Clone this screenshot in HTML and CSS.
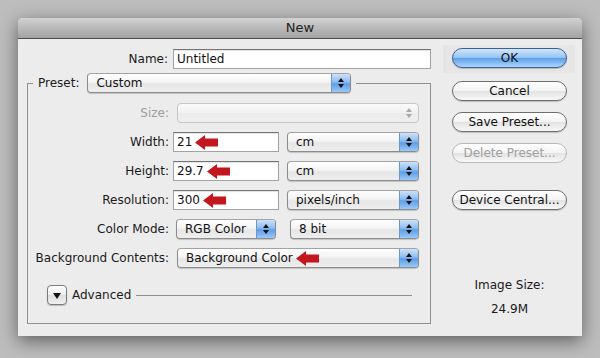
FILE: index.html
```html
<!DOCTYPE html>
<html lang="en">
<head>
    <meta charset="UTF-8">
    <meta name="viewport" content="width=device-width, initial-scale=1.0">
    <title>New</title>
    <link rel="stylesheet" href="styles.css">
</head>
<body>

    <div class="window">
        <div class="title-bar">New</div>

        <div class="window-body">
            <div class="main-panel">
                <div class="name-row">
                    <span class="field-label">Name:</span>
                    <div class="text-field name-field">Untitled</div>
                </div>

                <fieldset class="preset-group">
                    <legend class="preset-legend">
                        <span class="field-label">Preset:</span>
                        <div class="popup preset-popup">
                            <span class="popup-text">Custom</span>
                            <span class="popup-cap"></span>
                        </div>
                    </legend>

                    <div class="form-grid">
                        <span class="field-label disabled">Size:</span>
                        <div class="control-cell">
                            <div class="popup popup-disabled size-popup">
                                <span class="popup-text"></span>
                                <span class="popup-cap"></span>
                            </div>
                        </div>

                        <span class="field-label">Width:</span>
                        <div class="control-cell">
                            <div class="text-field value-field">21<svg class="red-arrow" width="23" height="15" viewBox="0 0 23 15"><path d="M0 7.5 L10 0 V3.5 H23 V11.5 H10 V15 Z"/></svg></div>
                            <div class="popup unit-popup">
                                <span class="popup-text">cm</span>
                                <span class="popup-cap"></span>
                            </div>
                        </div>

                        <span class="field-label">Height:</span>
                        <div class="control-cell">
                            <div class="text-field value-field">29.7<svg class="red-arrow" width="23" height="15" viewBox="0 0 23 15"><path d="M0 7.5 L10 0 V3.5 H23 V11.5 H10 V15 Z"/></svg></div>
                            <div class="popup unit-popup">
                                <span class="popup-text">cm</span>
                                <span class="popup-cap"></span>
                            </div>
                        </div>

                        <span class="field-label">Resolution:</span>
                        <div class="control-cell">
                            <div class="text-field value-field">300<svg class="red-arrow" width="23" height="15" viewBox="0 0 23 15"><path d="M0 7.5 L10 0 V3.5 H23 V11.5 H10 V15 Z"/></svg></div>
                            <div class="popup unit-popup">
                                <span class="popup-text">pixels/inch</span>
                                <span class="popup-cap"></span>
                            </div>
                        </div>

                        <span class="field-label">Color Mode:</span>
                        <div class="control-cell">
                            <div class="popup mode-popup">
                                <span class="popup-text">RGB Color</span>
                                <span class="popup-cap"></span>
                            </div>
                            <div class="popup bits-popup">
                                <span class="popup-text">8 bit</span>
                                <span class="popup-cap"></span>
                            </div>
                        </div>

                        <span class="field-label">Background Contents:</span>
                        <div class="control-cell">
                            <div class="popup background-popup">
                                <span class="popup-text">Background Color<svg class="red-arrow" width="23" height="15" viewBox="0 0 23 15"><path d="M0 7.5 L10 0 V3.5 H23 V11.5 H10 V15 Z"/></svg></span>
                                <span class="popup-cap"></span>
                            </div>
                        </div>
                    </div>

                    <div class="advanced-row">
                        <span class="disclosure-button"></span>
                        <span class="advanced-label">Advanced</span>
                        <span class="advanced-line"></span>
                    </div>
                </fieldset>
            </div>

            <div class="button-column">
                <div class="default-area">
                    <button class="push-button ok-button">OK</button>
                </div>
                <button class="push-button">Cancel</button>
                <button class="push-button">Save Preset...</button>
                <button class="push-button" disabled>Delete Preset...</button>
                <button class="push-button device-button">Device Central...</button>

                <p class="image-size-label">Image Size:</p>
                <p class="image-size-value">24.9M</p>
            </div>
        </div>
    </div>

</body>
</html>
```

FILE: styles.css
```css
* {
    box-sizing: border-box;
    margin: 0;
    padding: 0;
}

body {
    font-family: 'DejaVu Sans', 'Liberation Sans', sans-serif;
    font-size: 12px;
    color: #1a1a1a;
    background: #bdbdbd;
    height: 358px;
    overflow: hidden;
    padding: 18px 0 0 18px;
}

.window {
    width: 564px;
    height: 318px;
    background: #ececec;
    border-radius: 5px 5px 0 0;
    box-shadow: 0 5px 18px rgba(0, 0, 0, 0.5);
}

.title-bar {
    height: 21px;
    line-height: 20px;
    text-align: center;
    font-size: 13px;
    color: #222;
    background: linear-gradient(#d2d2d2, #b9b9b9 50%, #a4a4a4);
    border-bottom: 1px solid #4e4e4e;
    border-radius: 5px 5px 0 0;
}

.window-body {
    display: flex;
}

.main-panel {
    width: 422px;
}

/* name */

.name-row {
    display: grid;
    grid-template-columns: 150px 258px;
    column-gap: 5px;
    align-items: center;
    padding-top: 10px;
}

.field-label {
    text-align: right;
    white-space: nowrap;
}

.field-label.disabled {
    color: #9c9c9c;
}

.text-field {
    display: flex;
    align-items: center;
    height: 20px;
    border: 1px solid #a3a3a3;
    border-top-color: #747474;
    background: #fff;
    padding-left: 3px;
    box-shadow: inset 0 1px 1px rgba(0, 0, 0, 0.12);
    color: #111;
}

/* preset group */

.preset-group {
    margin: 4px 0 0 9px;
    width: 404px;
    border: 1px solid #8f8f8f;
    padding: 10px 0 18px 0;
}

.preset-legend {
    display: flex;
    align-items: center;
    margin-left: 5px;
    padding: 0 5px;
}

.preset-popup {
    width: 264px;
    margin-left: 8px;
}

.form-grid {
    display: grid;
    grid-template-columns: 141px 246px;
    grid-auto-rows: 20px;
    column-gap: 4px;
    row-gap: 9px;
    align-items: center;
}

.control-cell {
    display: flex;
    height: 20px;
}

.value-field {
    width: 106px;
}

.red-arrow {
    fill: #c4161e;
    margin-left: 3px;
    flex-shrink: 0;
}

.unit-popup {
    flex: 1;
    margin-left: 8px;
}

.size-popup,
.background-popup {
    flex: 1;
    margin-left: 4px;
}

.mode-popup {
    width: 100px;
    margin-left: 3px;
}

.bits-popup {
    flex: 1;
    margin-left: 14px;
}

/* popup buttons */

.popup {
    display: flex;
    align-items: stretch;
    height: 20px;
    border: 1px solid #8c8c8c;
    border-top-color: #a3a3a3;
    border-radius: 4px;
    background: linear-gradient(#fefefe, #f4f4f4 45%, #e6e6e6 55%, #eeeeee);
    box-shadow: 0 1px 1px rgba(0, 0, 0, 0.18);
    overflow: hidden;
}

.popup-text {
    flex: 1;
    display: flex;
    align-items: center;
    padding-left: 8px;
    white-space: nowrap;
    color: #111;
}

.popup-cap {
    width: 19px;
    display: flex;
    flex-direction: column;
    align-items: center;
    justify-content: center;
    gap: 2px;
    background: linear-gradient(#cde2f8, #8dbcf0 45%, #5e9de8 55%, #9acaf7);
    border-left: 1px solid #6f96c8;
}

.popup-cap::before {
    content: '';
    border-left: 3px solid transparent;
    border-right: 3px solid transparent;
    border-bottom: 4px solid #111;
}

.popup-cap::after {
    content: '';
    border-left: 3px solid transparent;
    border-right: 3px solid transparent;
    border-top: 4px solid #111;
}

.popup-disabled {
    border-color: #c6c6c6;
    box-shadow: none;
    background: linear-gradient(#fafafa, #f1f1f1 50%, #ebebeb 50%, #efefef);
}

.popup-disabled .popup-cap {
    background: none;
    border-left: none;
}

.popup-disabled .popup-cap::before {
    border-bottom-color: #a8a8a8;
}

.popup-disabled .popup-cap::after {
    border-top-color: #a8a8a8;
}

/* advanced */

.advanced-row {
    display: flex;
    align-items: center;
    height: 20px;
    margin-top: 17px;
    padding-left: 19px;
    padding-right: 18px;
}

.disclosure-button {
    width: 20px;
    height: 20px;
    display: flex;
    align-items: center;
    justify-content: center;
    border: 1px solid #7a7a7a;
    border-radius: 4px;
    background: linear-gradient(#ffffff, #ececec 50%, #dddddd 50%, #f0f0f0);
    box-shadow: 0 1px 1px rgba(0, 0, 0, 0.2);
}

.disclosure-button::after {
    content: '';
    margin-top: 2px;
    border-left: 4px solid transparent;
    border-right: 4px solid transparent;
    border-top: 6px solid #111;
}

.advanced-label {
    margin-left: 5px;
}

.advanced-line {
    flex: 1;
    height: 1px;
    margin-left: 5px;
    background: #8f8f8f;
}

/* right column */

.button-column {
    width: 130px;
    padding: 9px 0 0 12px;
    display: flex;
    flex-direction: column;
    align-items: flex-start;
}

.push-button {
    width: 115px;
    height: 20px;
    margin-bottom: 11px;
    font-family: inherit;
    font-size: 12px;
    color: #111;
    border: 1px solid #6e6e6e;
    border-radius: 10px;
    background: linear-gradient(#ffffff, #f3f3f3 50%, #e2e2e2 50%, #f8f8f8);
    box-shadow: 0 1px 1px rgba(0, 0, 0, 0.2);
}

.push-button:disabled {
    color: #a0a0a0;
    border-color: #b8b8b8;
    box-shadow: none;
}

.default-area {
    margin: -3px 0 8px -9px;
    padding: 3px 8px 5px 9px;
    background: #e6e6e6;
}

.default-area .push-button {
    margin-bottom: 0;
}

.ok-button {
    border-color: #3d5f92;
    background: linear-gradient(#d3e7fc, #94c3f3 48%, #5f9fea 52%, #acd6fb);
}

.device-button {
    margin-top: 16px;
}

.image-size-label {
    width: 115px;
    text-align: center;
    margin-top: 56px;
    line-height: 16px;
}

.image-size-value {
    width: 115px;
    text-align: center;
    margin-top: 8px;
    line-height: 16px;
}
```
